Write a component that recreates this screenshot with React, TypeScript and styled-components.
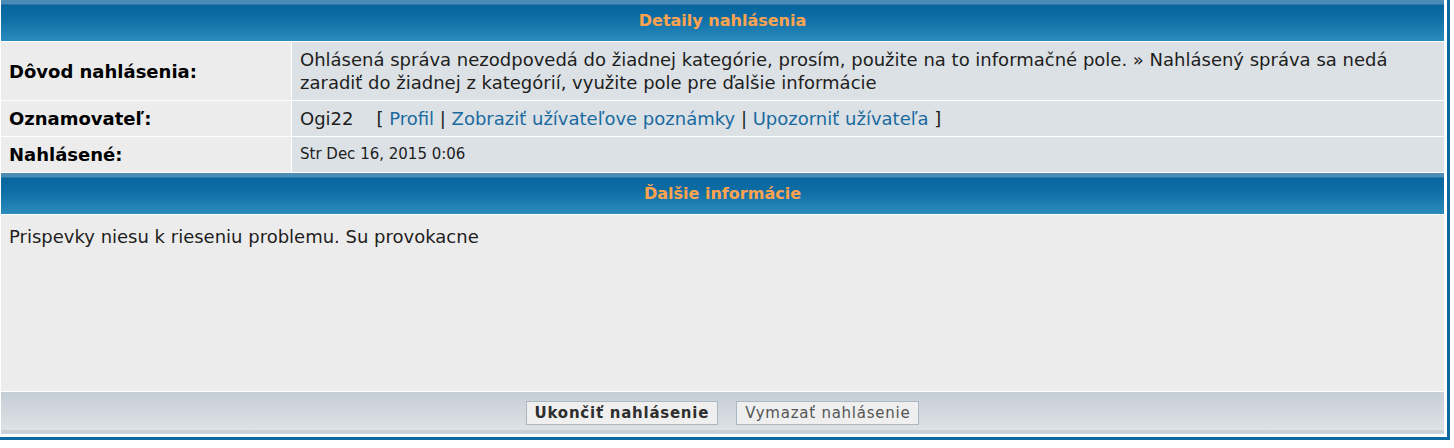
import styled, { createGlobalStyle } from "styled-components";

const GlobalStyle = createGlobalStyle`
  html, body {
    margin: 0;
    padding: 0;
    background: #ffffff;
  }
  body {
    font-family: "DejaVu Sans", Verdana, sans-serif;
    color: #1e1e1e;
  }
`;

const Frame = styled.div`
  box-sizing: border-box;
  width: 1450px;
  padding: 0 3px 3px 1px;
  border-right: 3px solid #0b68a0;
  border-bottom: 3px solid #0b68a0;
  background: #ffffff;
`;

const Board = styled.div`
  display: flex;
  flex-direction: column;
  gap: 1px;
`;

const CatHeader = styled.div`
  height: 41px;
  display: flex;
  align-items: center;
  justify-content: center;
  background: linear-gradient(
    to bottom,
    #4a8cb5 0px,
    #4a8cb5 4px,
    #07669e 5px,
    #0c6ca3 40%,
    #2a8bbe 100%
  );
  color: #ffa34f;
  font-size: 16px;
  font-weight: bold;
`;

const DetailGrid = styled.div`
  display: grid;
  grid-template-columns: 290px 1fr;
  gap: 1px;
`;

const Label = styled.div`
  display: flex;
  align-items: center;
  padding: 6px 8px;
  background: #ececec;
  color: #000000;
  font-size: 18px;
  font-weight: bold;
  line-height: 23px;
`;

const Value = styled.div<{ $small?: boolean }>`
  display: flex;
  align-items: center;
  padding: 6px 8px;
  background: #dce1e5;
  color: #1e1e1e;
  font-size: ${({ $small }) => ($small ? "15px" : "18px")};
  line-height: 23px;
  white-space: pre-wrap;
`;

const Link = styled.a`
  color: #1a6aa0;
  text-decoration: none;
`;

const InfoBody = styled.div`
  height: 176px;
  box-sizing: border-box;
  padding: 10px 8px;
  background: #ececec;
  font-size: 18px;
  line-height: 23px;
  color: #1e1e1e;
`;

const ActionBar = styled.div`
  height: 42px;
  box-sizing: border-box;
  padding: 9px 0 9px;
  display: flex;
  align-items: flex-start;
  justify-content: center;
  gap: 18px;
  background: linear-gradient(
    to bottom,
    #c6ced6 0px,
    #dde2e6 38px,
    #c8d0d8 38px,
    #c8d0d8 42px
  );
`;

const Button = styled.button<{ $primary?: boolean }>`
  height: 24px;
  padding: 0 8px;
  border: 1px solid #aab6c0;
  background: #efefef;
  color: ${({ $primary }) => ($primary ? "#2e2e2e" : "#555555")};
  font-family: "DejaVu Sans", Verdana, sans-serif;
  font-size: 15px;
  letter-spacing: 0.75px;
  font-weight: ${({ $primary }) => ($primary ? "bold" : "normal")};
  line-height: 22px;
  cursor: pointer;
`;

export default function App() {
  return (
    <>
      <GlobalStyle />
      <Frame>
        <Board>
          <CatHeader>Detaily nahlásenia</CatHeader>
          <DetailGrid>
            <Label>Dôvod nahlásenia:</Label>
            <Value>
              Ohlásená správa nezodpovedá do žiadnej kategórie, prosím, použite
              na to informačné pole. » Nahlásený správa sa nedá zaradiť do
              žiadnej z kategórií, využite pole pre ďalšie informácie
            </Value>
            <Label>Oznamovateľ:</Label>
            <Value>
              <span>
                {"Ogi22    [ "}
                <Link href="#">Profil</Link>
                {" | "}
                <Link href="#">Zobraziť užívateľove poznámky</Link>
                {" | "}
                <Link href="#">Upozorniť užívateľa</Link>
                {" ]"}
              </span>
            </Value>
            <Label>Nahlásené:</Label>
            <Value $small>Str Dec 16, 2015 0:06</Value>
          </DetailGrid>
          <CatHeader>Ďalšie informácie</CatHeader>
          <InfoBody>Prispevky niesu k rieseniu problemu. Su provokacne</InfoBody>
          <ActionBar>
            <Button $primary>Ukončiť nahlásenie</Button>
            <Button>Vymazať nahlásenie</Button>
          </ActionBar>
        </Board>
      </Frame>
    </>
  );
}
